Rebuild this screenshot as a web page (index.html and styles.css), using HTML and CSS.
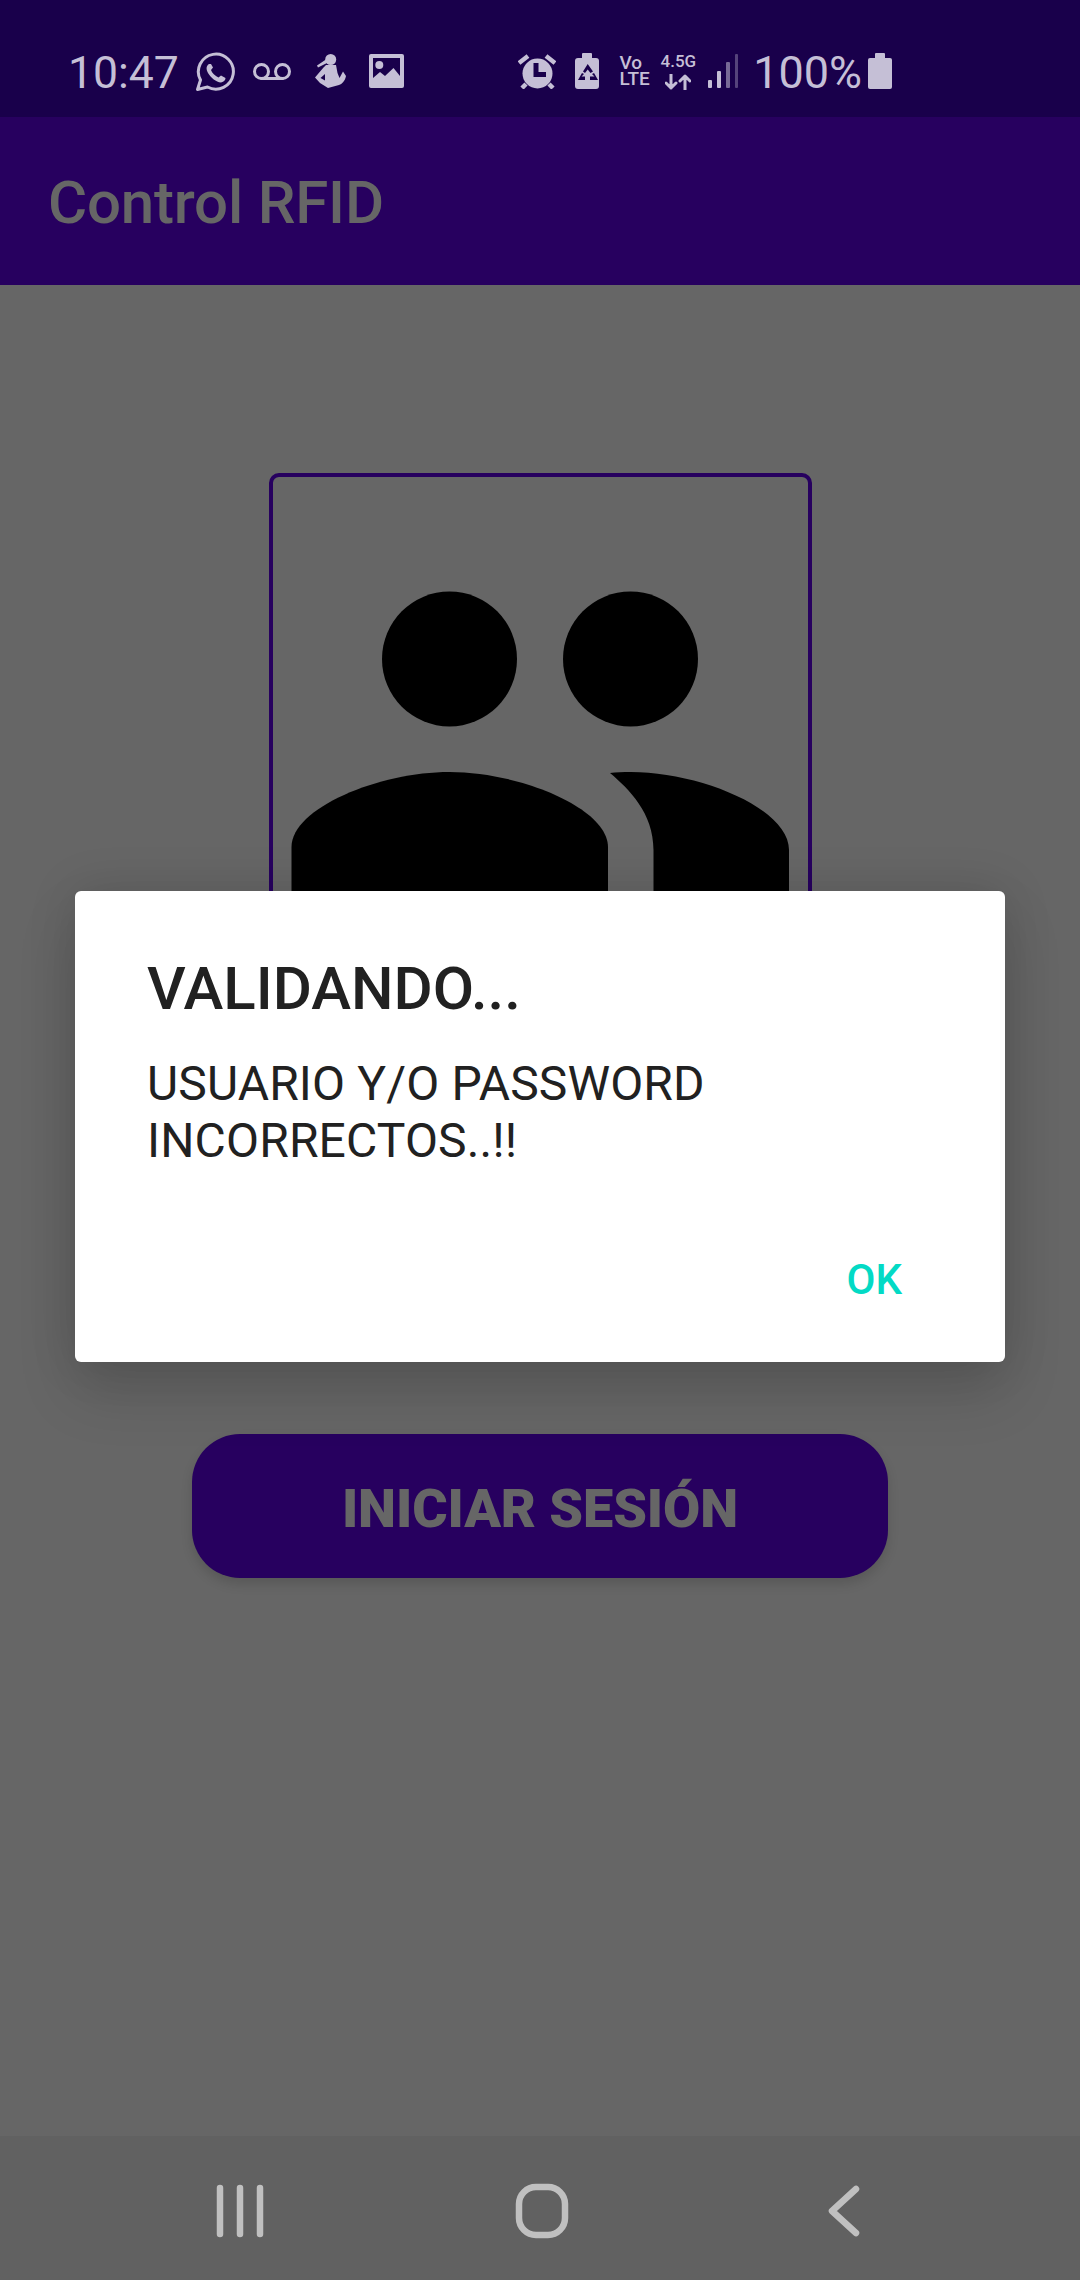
FILE: index.html
```html
<!DOCTYPE html>
<html lang="es">
<head>
<meta charset="utf-8">
<title>Control RFID</title>
<link rel="stylesheet" href="styles.css">
</head>
<body>
<div class="screen">
  <header class="status">
    <div class="status-left">
      <span class="clock">10:47</span>
      <svg class="ic ic-wa" viewBox="0 0 39 39"><path class="line" d="M1.5 37.5 L4.5 28 A17.5 17.5 0 1 1 11.5 35 Z"/><path class="fill" d="M13 12 C10 14 10 17 12 21 C15 26 20 30 25 30.5 C28 30 29.5 28 29.5 26 L25 23.5 L22.5 25.5 C19 24 16 21 15 18 L17 15.5 L15 12 Z"/></svg>
      <svg class="ic ic-vm" viewBox="0 0 38 17"><path class="line" d="M8.5 15.5 H29.5"/><circle class="line" cx="8.5" cy="8.5" r="7"/><circle class="line" cx="29.5" cy="8.5" r="7"/></svg>
      <svg class="ic ic-fig" viewBox="0 0 31 34"><circle class="fill" cx="15.7" cy="5.5" r="5.5"/><path class="fill" d="M11 11 H21 L22.5 19 L24.5 24 L28 17.5 L31 22 C30 27 27 30 24 31 L13 34 L5 29 L0 23.5 L8.5 13.5 Z"/><path class="fill" d="M11.7 5 L2 11.5 L3 13.5 L12 9 Z"/><path class="hole" d="M10 20 L5.5 24 L10 26.5 Z"/></svg>
      <svg class="ic ic-img" viewBox="0 0 35 34"><rect class="fill" width="35" height="34" rx="2"/><path class="hole" d="M4 4 H31 V22 L24.5 14 L16 22 L11 18 L4 24 Z"/><circle class="fill" cx="10.3" cy="11" r="4"/></svg>
    </div>
    <div class="status-right">
      <svg class="ic ic-alarm" viewBox="0 0 38 35"><circle class="fill" cx="19.5" cy="19.5" r="15"/><path class="ear" d="M1 9 L10 2 M37 9 L28 2 M4 34 L8 30 M35 34 L31 30"/><path class="hand" d="M18 9 V20.5 H28"/></svg>
      <svg class="ic ic-bat" viewBox="0 0 24 36"><rect class="fill" x="7" width="10" height="8" rx="1"/><rect class="fill" y="5" width="24" height="31" rx="3"/><path class="hole" d="M12.7 11 L8 18.5 L10 20 L12.7 16.5 L15.5 20 L18 18.5 Z"/><path class="hole" d="M7 20 L3 27 L10 27 V23.5 L6.5 23.5 L9 21 Z"/><path class="hole" d="M19 20 L23 27 L15 27 V23.5 L19.5 23.5 L17 21 Z"/></svg>
      <span class="net net-volte">Vo LTE</span>
      <span class="net net-45g"><span>4.5G</span><svg class="ic ic-arrows" viewBox="0 0 26 16"><path class="line" d="M6 0 V14 M1 9 L6 14 L11 9 M20 16 V2 M15 7 L20 2 L25 7"/></svg></span>
      <svg class="ic ic-signal" viewBox="0 0 30 34"><rect class="fill" y="26" width="4" height="8" rx="1"/><rect class="fill" x="9" y="17" width="4" height="17" rx="1"/><rect class="fill dim" x="18" y="8" width="4" height="26" rx="1"/><rect class="fill dimmer" x="27" width="3" height="34" rx="1"/></svg>
      <span class="percent">100%</span>
      <svg class="ic ic-charge" viewBox="0 0 24 36"><rect class="fill" x="7" width="10" height="6" rx="1"/><rect class="fill" y="5" width="24" height="31" rx="2"/></svg>
    </div>
  </header>

  <div class="appbar"><h1 class="appbar-title">Control RFID</h1></div>

  <main class="content">
    <div class="avatar">
      <svg class="avatar-icon" viewBox="4 4 535 535">
        <circle cx="180.5" cy="186" r="67.5"/>
        <circle cx="361.5" cy="186" r="67.5"/>
        <path d="M22.5 539 V374 C22.5 335 110 299 180.5 299 C251 299 339 335 339 374 V539 Z"/>
        <path d="M341 300 C360 316 384.5 340 384.5 377 V539 H520 V377 C520 335 430 299 362 299 C354 299 347 299 341 300 Z"/>
      </svg>
    </div>
    <button class="login" type="button">INICIAR SESIÓN</button>
  </main>

  <nav class="nav">
    <svg class="nav-ic" viewBox="0 0 60 56"><path d="M10 5 V51 M30 5 V51 M50 5 V51"/></svg>
    <svg class="nav-ic" viewBox="0 0 60 56"><rect x="7" y="4" width="46" height="48" rx="17"/></svg>
    <svg class="nav-ic" viewBox="0 0 60 56"><path d="M42 6 L18 28 L42 50"/></svg>
  </nav>

  <div class="dialog" role="alertdialog">
    <h2 class="dialog-title">VALIDANDO...</h2>
    <p class="dialog-msg">USUARIO Y/O PASSWORD<br>INCORRECTOS..!!</p>
    <div class="dialog-actions"><span class="dialog-ok">OK</span></div>
  </div>
</div>
</body>
</html>
```

FILE: styles.css
```css
* { box-sizing: border-box; }
html, body { margin: 0; padding: 0; }
body { background: #666; font-family: Roboto, "Liberation Sans", sans-serif; }

.screen {
  position: relative;
  width: 1080px;
  height: 2280px;
  overflow: hidden;
  display: flex;
  flex-direction: column;
  background: #666;
}

/* status bar */
.status {
  height: 117px;
  flex: none;
  display: flex;
  align-items: center;
  justify-content: space-between;
  padding: 25px 188px 0 68px;
  background: #19004b;
  color: #c5bfd6;
}
.status-left, .status-right { display: flex; align-items: center; }
.clock, .percent { line-height: 50px; padding-top: 4px; }
.clock { font-size: 44.5px; }
.percent { font-size: 45px; margin-left: 15px; }
.ic { display: block; flex: none; }
.fill { fill: #c5bfd6; }
.line { fill: none; stroke: #c5bfd6; stroke-width: 3; stroke-linecap: round; stroke-linejoin: round; }
.ear { fill: none; stroke: #c5bfd6; stroke-width: 4.5; }
.hole { fill: #19004b; }
.hand { fill: none; stroke: #19004b; stroke-width: 5; }
.dim { opacity: .55; }
.dimmer { opacity: .35; }
.ic-wa { width: 39px; height: 39px; margin-left: 17px; }
.ic-vm { width: 38px; height: 17px; margin-left: 18px; }
.ic-fig { width: 31px; height: 34px; margin-left: 24px; }
.ic-img { width: 35px; height: 34px; margin-left: 23px; }
.ic-alarm { width: 38px; height: 35px; }
.ic-bat { width: 24px; height: 36px; margin-left: 19px; }
.ic-signal { width: 30px; height: 34px; margin-left: 12px; }
.ic-charge { width: 24px; height: 36px; margin-left: 6px; }
.ic-arrows { width: 26px; height: 16px; margin-top: 5px; }
.net {
  display: flex;
  flex-direction: column;
  font-size: 17px;
  font-weight: 500;
  line-height: 16px;
}
.net-volte { display: block; width: 31px; margin-left: 21px; font-size: 19px; }
.net-45g { margin-left: 10px; align-items: center; }

/* app bar */
.appbar {
  height: 168px;
  flex: none;
  display: flex;
  align-items: center;
  padding: 3px 0 0 48px;
  background: #27005f;
}
.appbar-title { margin: 0; font-size: 60px; font-weight: 500; letter-spacing: -.2px; color: #666; }

/* content */
.content {
  flex: 1;
  display: flex;
  flex-direction: column;
  align-items: center;
}
.avatar {
  width: 543px;
  height: 543px;
  margin-top: 188px;
  border: 4px solid #27005f;
  border-radius: 10px;
}
.avatar-icon { display: block; width: 535px; height: 535px; fill: #000; }
.login {
  width: 696px;
  height: 144px;
  margin-top: 418px;
  padding: 5px 0 0;
  border: 0;
  border-radius: 48px;
  background: #27005f;
  color: #666;
  font-family: inherit;
  font-size: 54px;
  font-weight: 900;
  letter-spacing: -.1px;
  box-shadow: 0 6px 12px rgba(0, 0, 0, .14);
}

/* navigation */
.nav {
  height: 144px;
  flex: none;
  display: flex;
  align-items: center;
  justify-content: space-between;
  padding: 6px 206px 0 210px;
  background: #616161;
}
.nav-ic { display: block; width: 60px; height: 56px; fill: none; stroke: #c0c0c0; stroke-width: 6.5; stroke-linecap: round; stroke-linejoin: round; }

/* dialog */
.dialog {
  position: absolute;
  left: 75px;
  top: 891px;
  width: 930px;
  height: 471px;
  padding: 63px 72px 0;
  border-radius: 6px;
  background: #fff;
  color: #212121;
  box-shadow: 0 30px 60px rgba(0, 0, 0, .14), 0 0 50px rgba(0, 0, 0, .12);
}
.dialog-title { margin: 0; font-size: 60px; font-weight: 500; line-height: 70px; }
.dialog-msg { margin: 31px 0 0; font-size: 48px; line-height: 57px; letter-spacing: .15px; }
.dialog-actions { display: flex; justify-content: flex-end; margin-top: 81px; padding-right: 31px; }
.dialog-ok { font-size: 42px; font-weight: 500; line-height: 60px; color: #03dac5; }
```
